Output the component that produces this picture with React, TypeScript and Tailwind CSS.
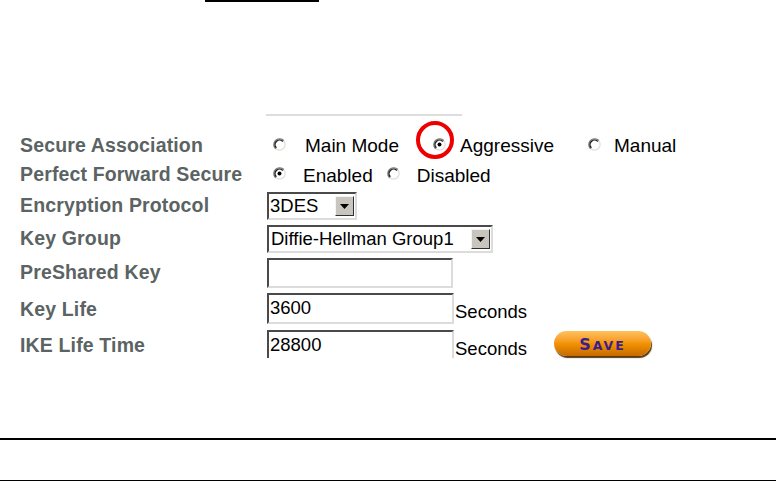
import React from "react";

function Radio({ checked = false }: { checked?: boolean }) {
  return (
    <svg width="13" height="13" viewBox="0 0 13 13" className="shrink-0">
      <circle cx="6.5" cy="6.5" r="6" fill="#ffffff" />
      <circle cx="6.5" cy="6.5" r="5.6" fill="none" stroke="#e2dfd8" strokeWidth="1.3" />
      <path d="M10.8 2.6 A5.6 5.6 0 0 0 2.6 10.8" fill="none" stroke="#7a7a7a" strokeWidth="1.4" />
      <path d="M9.8 3.4 A4.4 4.4 0 0 0 3.4 9.8" fill="none" stroke="#1e1e1e" strokeWidth="1.4" />
      {checked && <circle cx="6.5" cy="6.5" r="2" fill="#000000" />}
    </svg>
  );
}

function DropButton() {
  return (
    <div className="w-[19px] h-[20px] bg-[#c8c5be] border border-t-[#f4f4f4] border-l-[#f4f4f4] border-b-[#303030] border-r-[#303030] flex items-center justify-center shrink-0">
      <svg width="9" height="5" viewBox="0 0 9 5">
        <polygon points="0,0 9,0 4.5,5" fill="#000" />
      </svg>
    </div>
  );
}

const inset =
  "border-2 border-t-[#4a4a4a] border-l-[#4a4a4a] border-b-[#dcdcdc] border-r-[#dcdcdc] bg-white";

function Label({ children, pt = "" }: { children: React.ReactNode; pt?: string }) {
  return (
    <div className={`flex items-center text-[19.5px] font-bold text-[#5b6363] tracking-[0.15px] leading-none whitespace-nowrap ${pt}`}>
      {children}
    </div>
  );
}

export default function App() {
  return (
    <div className="w-[777px] h-[481px] bg-white relative overflow-hidden font-['Liberation_Sans',Arial,sans-serif] text-black">
      <div className="ml-[205px] w-[114px] h-[2px] bg-black" />
      <div className="mt-[112px] ml-[266px] w-[196px] h-[2px] bg-[#dddddd]" />

      <div className="mt-[15px] pl-[20px] grid grid-cols-[247px_1fr] text-[19px] leading-none">
        {/* Row 1 */}
        <div className="h-[29px] flex"><Label>Secure Association</Label></div>
        <div className="h-[29px] flex items-center whitespace-nowrap">
          <div className="ml-[6px] -mt-[3px]"><Radio /></div>
          <span className="ml-[19px]">Main Mode</span>
          <div className="ml-[34px] -mt-[3px]"><Radio checked /></div>
          <span className="ml-[14px]">Aggressive</span>
          <div className="ml-[34px] -mt-[3px]"><Radio /></div>
          <span className="ml-[13px]">Manual</span>
        </div>

        {/* Row 2 */}
        <div className="h-[30px] flex"><Label>Perfect Forward Secure</Label></div>
        <div className="h-[30px] flex items-center whitespace-nowrap">
          <div className="ml-[6px] -mt-[3px]"><Radio checked /></div>
          <span className="ml-[17px]">Enabled</span>
          <div className="ml-[14px] -mt-[3px]"><Radio /></div>
          <span className="ml-[17px]">Disabled</span>
        </div>

        {/* Row 3 */}
        <div className="h-[32px] flex"><Label>Encryption Protocol</Label></div>
        <div className="h-[32px] flex items-center">
          <div className={`${inset} w-[90px] h-[28px] flex items-center justify-between pl-[1px] pr-[1px]`}>
            <span className="text-[18.5px]">3DES</span>
            <DropButton />
          </div>
        </div>

        {/* Row 4 */}
        <div className="h-[34px] flex"><Label>Key Group</Label></div>
        <div className="h-[34px] flex items-center">
          <div className={`${inset} w-[226px] h-[28px] flex items-center justify-between pl-[2px] pr-[1px]`}>
            <span className="text-[18.5px] whitespace-nowrap">Diffie-Hellman Group1</span>
            <DropButton />
          </div>
        </div>

        {/* Row 5 */}
        <div className="h-[34px] flex"><Label>PreShared Key</Label></div>
        <div className="h-[34px] flex items-center">
          <div className={`${inset} w-[186px] h-[30px]`} />
        </div>

        {/* Row 6 */}
        <div className="h-[36px] flex"><Label pt="pt-[3px]">Key Life</Label></div>
        <div className="h-[36px] flex items-center whitespace-nowrap">
          <div className={`${inset} w-[187px] h-[31px] flex items-center pl-[1px] text-[18.5px]`}>3600</div>
          <span className="ml-[1px] mt-[8px] text-[18.5px]">Seconds</span>
        </div>

        {/* Row 7 */}
        <div className="h-[36px] flex"><Label pt="pt-[4px]">IKE Life Time</Label></div>
        <div className="h-[36px] flex items-start whitespace-nowrap pt-[4px]">
          <div className="w-[187px] h-[28px] border-2 border-b-0 border-t-[#4a4a4a] border-l-[#4a4a4a] border-r-[#dcdcdc] bg-white flex items-center pl-[1px] text-[18.5px]">28800</div>
          <span className="ml-[1px] mt-[10px] text-[18.5px]">Seconds</span>
          <div className="ml-[27px] mt-[1px] w-[97px] h-[25px] rounded-full bg-gradient-to-b from-[#ffc25a] via-[#f39300] to-[#c66a00] shadow-[1px_2px_1px_#5a3a10] flex items-center justify-center">
            <span className="font-['DejaVu_Sans',sans-serif] font-bold text-[#3a1f8c] tracking-[2px] leading-none">
              <span className="text-[16px]">S</span>
              <span className="text-[12.5px]">AVE</span>
            </span>
          </div>
        </div>
      </div>

      <div className="mt-[76px] w-[776px] h-[2px] bg-black" />
      <div className="mt-[40px] w-[776px] h-[2px] bg-black" />

      <div className="absolute left-[416px] top-[121px] w-[38px] h-[38px] rounded-full border-[4px] border-[#ee0000]" />
    </div>
  );
}
